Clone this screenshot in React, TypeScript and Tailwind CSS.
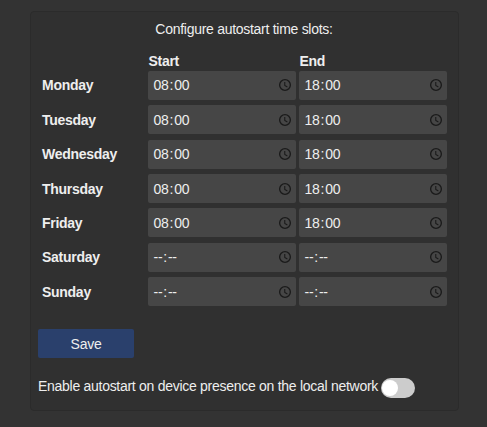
import { useState } from 'react';

type Slot = { day: string; start: string; end: string };

const slots: Slot[] = [
  { day: 'Monday', start: '08:00', end: '18:00' },
  { day: 'Tuesday', start: '08:00', end: '18:00' },
  { day: 'Wednesday', start: '08:00', end: '18:00' },
  { day: 'Thursday', start: '08:00', end: '18:00' },
  { day: 'Friday', start: '08:00', end: '18:00' },
  { day: 'Saturday', start: '--:--', end: '--:--' },
  { day: 'Sunday', start: '--:--', end: '--:--' },
];

function ClockIcon() {
  return (
    <svg className="size-[14px]" viewBox="0 0 24 24" fill="none" stroke="#1a1a1a">
      <circle cx="12" cy="12" r="9.2" strokeWidth="2.3" />
      <path d="M11.6 7v5.6l4.5 2.8" strokeWidth="1.8" />
    </svg>
  );
}

function TimeField({ value }: { value: string }) {
  const [hours, minutes] = value.split(':');
  return (
    <div className="flex h-[29px] w-[147.5px] items-center justify-between rounded-[2px] bg-[#464646] pr-[4px] pl-[4.3px]">
      <span className="flex leading-4">
        <span className="px-px">{hours}</span>:<span className="px-px">{minutes}</span>
      </span>
      <ClockIcon />
    </div>
  );
}

export default function App() {
  const [enabled, setEnabled] = useState(false);
  return (
    <div className="h-[427px] w-[487px] bg-[#333333] pt-[11px] pl-[30px] font-['Liberation_Sans',Arial,sans-serif] text-[14px] leading-4 tracking-[-0.28px] text-[#eeeeee]">
      <div className="h-[400px] w-[429px] rounded-[4px] border border-[#2b2b2b] bg-[#303030] pt-[9px] pl-[7px]">
        <p className="w-[412px] text-center">Configure autostart time slots:</p>
        <div className="mt-[16px] flex pl-[110.5px] font-bold">
          <span className="w-[151px]">Start</span>
          <span>End</span>
        </div>
        <div className="mt-[1.7px] flex flex-col gap-[5.45px]">
          {slots.map((slot) => (
            <div key={slot.day} className="flex items-center gap-[3.5px] pl-[4px]">
              <span className="w-[102.8px] font-bold">{slot.day}</span>
              <TimeField value={slot.start} />
              <TimeField value={slot.end} />
            </div>
          ))}
        </div>
        <button className="mt-[22.6px] block h-[29px] w-[96px] rounded-[2px] bg-[#2a406c] pt-px">Save</button>
        <div className="mt-[19.7px] flex items-center gap-[3px]">
          <span className="pb-[3px]">Enable autostart on device presence on the local network</span>
          <button
            role="switch"
            aria-checked={enabled}
            onClick={() => setEnabled(!enabled)}
            className={`flex h-5 w-[34px] items-center rounded-full bg-[#cccccc] px-px ${enabled ? 'justify-end' : 'justify-start'}`}
          >
            <span className="size-4 rounded-full bg-white" />
          </button>
        </div>
      </div>
    </div>
  );
}
